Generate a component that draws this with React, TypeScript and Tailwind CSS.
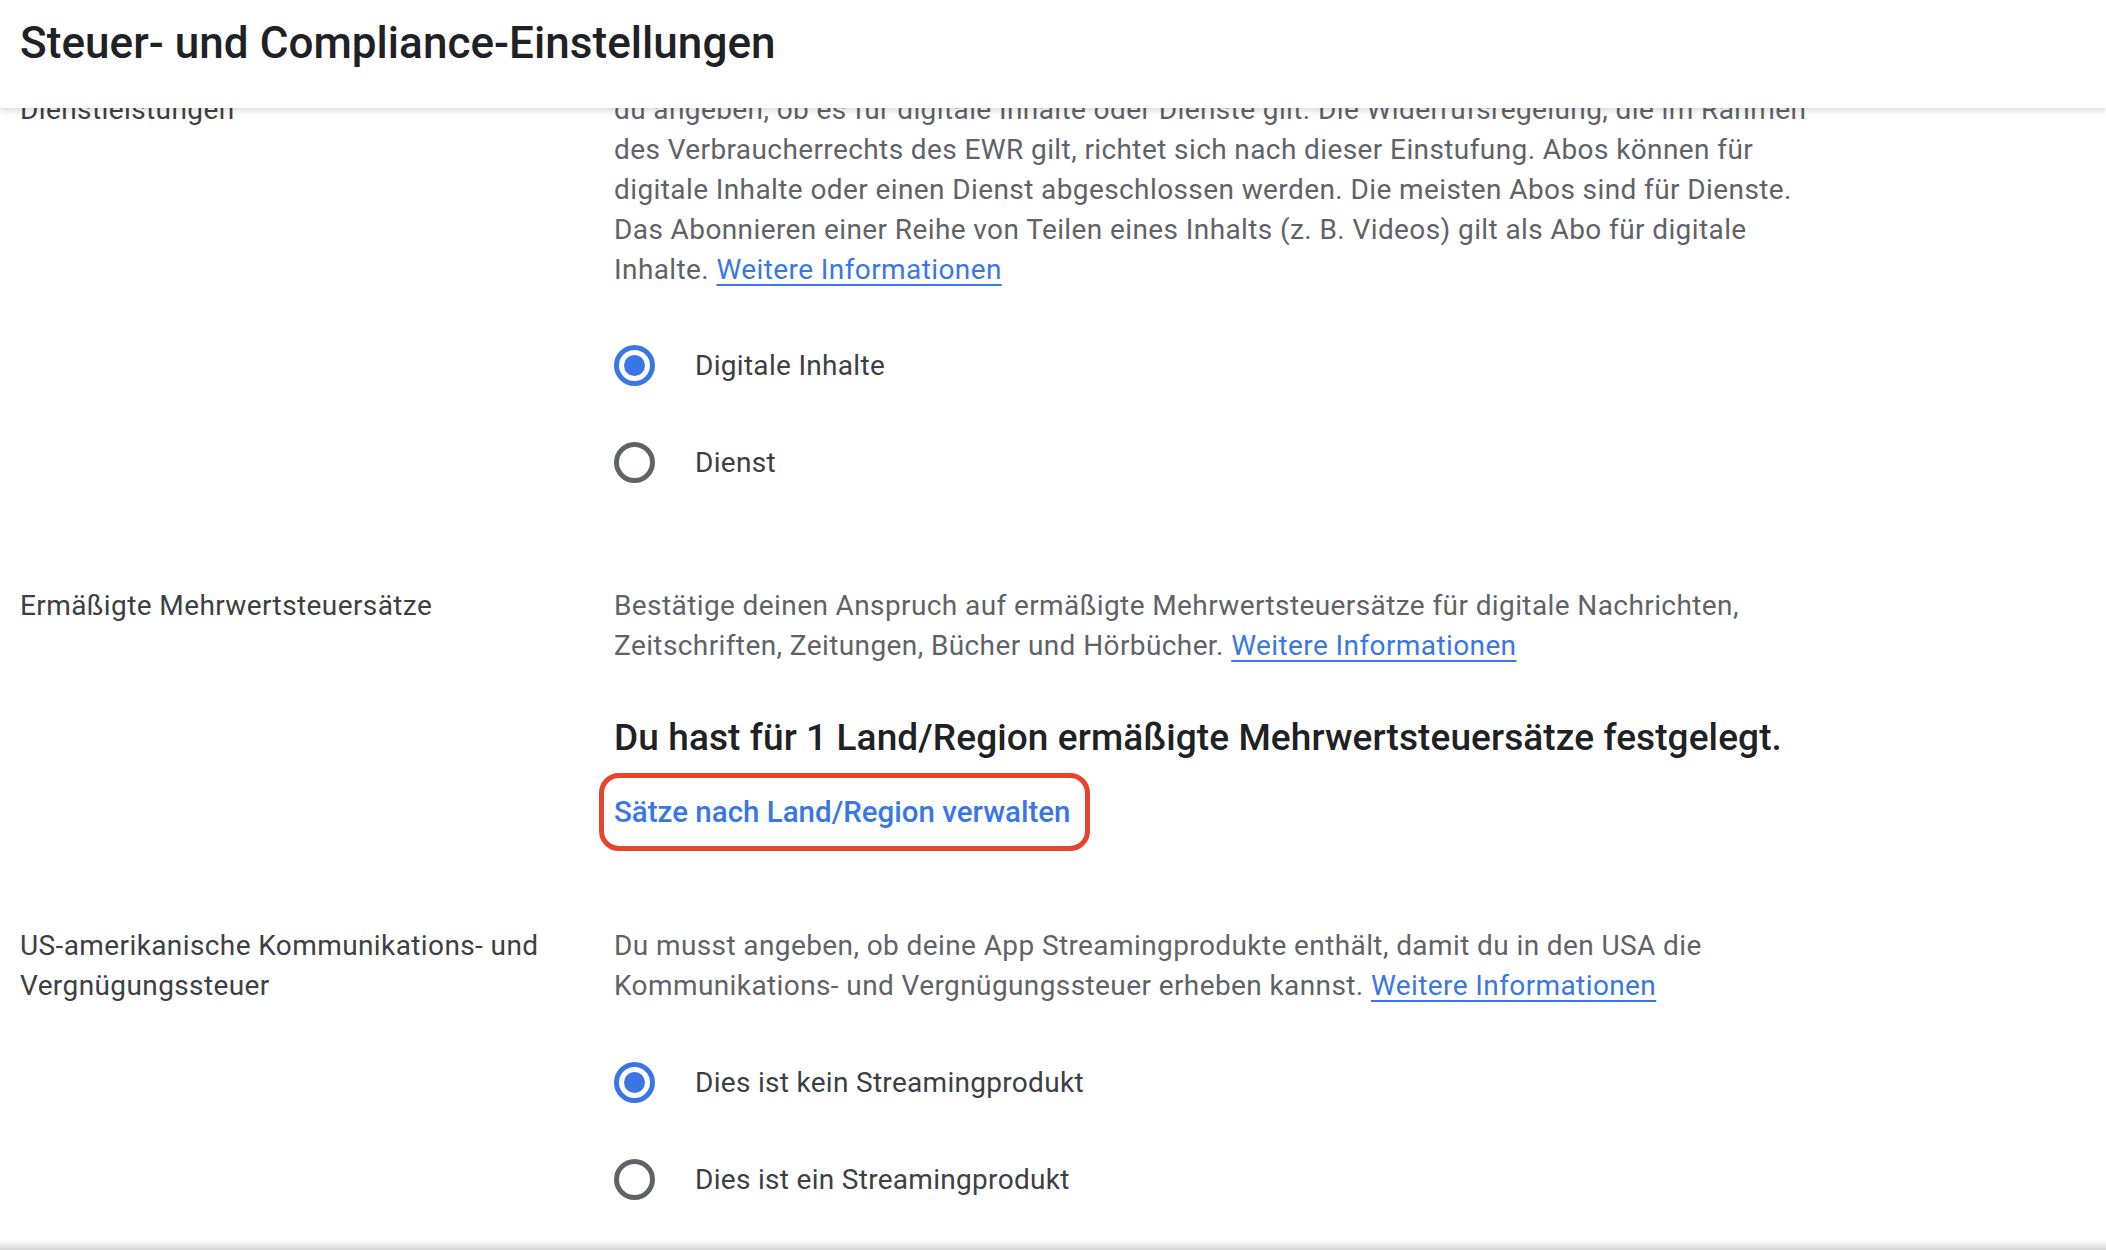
import React from "react";

const BLUE = "#3a77e4";

function Radio({ checked, label }: { checked?: boolean; label: string }) {
  return (
    <label className="flex h-[97px] items-center gap-[40px] cursor-pointer">
      <span
        className={
          checked
            ? "flex h-[41px] w-[41px] shrink-0 items-center justify-center rounded-full border-[5px] border-[#3a77e4]"
            : "flex h-[41px] w-[41px] shrink-0 items-center justify-center rounded-full border-[5px] border-[#5f6368]"
        }
      >
        {checked && <span className="h-[21px] w-[21px] rounded-full bg-[#3a77e4]" />}
      </span>
      <span className="text-[28px] leading-[40px] tracking-[0.3px] text-[#3c4043]">{label}</span>
    </label>
  );
}

function MoreInfo() {
  return (
    <a
      href="#"
      className="text-[#3a77e4] underline decoration-2 underline-offset-[5px]"
      style={{ color: BLUE }}
    >
      Weitere Informationen
    </a>
  );
}

function Section({ label, children }: { label: React.ReactNode; children: React.ReactNode }) {
  return (
    <section className="flex gap-[34px] px-[20px]">
      {/* Label column */}
      <div className="w-[560px] shrink-0 text-[28px] leading-[40px] tracking-[0.4px] text-[#3c4043]">{label}</div>
      {/* Content column */}
      <div className="max-w-[1205px] flex-1">{children}</div>
    </section>
  );
}

export default function App() {
  return (
    <div className="flex h-[1250px] w-full flex-col overflow-hidden bg-white font-['Roboto','Liberation_Sans',sans-serif]">
      {/* Sticky header */}
      <header className="relative z-10 h-[108px] shrink-0 bg-white px-[20px] pt-[15px] shadow-[0_3px_6px_rgba(0,0,0,0.14)]">
        <h1 className="text-[44px] leading-[56px] font-medium tracking-[0.05px] text-[#202124]">
          Steuer- und Compliance-Einstellungen
        </h1>
      </header>

      {/* Scrolled content */}
      <main className="flex-1 overflow-hidden">
        <div className="-mt-[58px] flex flex-col gap-[75px]">
          <Section label="Einstufung als digitale Inhalte oder Dienstleistungen">
            <p className="text-[28px] leading-[40px] tracking-[0.4px] text-[#5f6368]">
              Bei Abos und In-App-Produkten, die du in deiner App anbietest, musst
              <br />
              du angeben, ob es für digitale Inhalte oder Dienste gilt. Die Widerrufsregelung, die im Rahmen
              des Verbraucherrechts des EWR gilt, richtet sich nach dieser Einstufung. Abos können für
              digitale Inhalte oder einen Dienst abgeschlossen werden. Die meisten Abos sind für Dienste.
              Das Abonnieren einer Reihe von Teilen eines Inhalts (z. B. Videos) gilt als Abo für digitale
              Inhalte. <MoreInfo />
            </p>
            <div className="mt-[27px] flex flex-col">
              <Radio checked label="Digitale Inhalte" />
              <Radio label="Dienst" />
            </div>
          </Section>

          <Section label="Ermäßigte Mehrwertsteuersätze">
            <p className="text-[28px] leading-[40px] tracking-[0.4px] text-[#5f6368]">
              Bestätige deinen Anspruch auf ermäßigte Mehrwertsteuersätze für digitale Nachrichten,
              Zeitschriften, Zeitungen, Bücher und Hörbücher. <MoreInfo />
            </p>
            <h2 className="mt-[48px] text-[37px] leading-[48px] font-medium tracking-[0.1px] text-[#202124]">
              Du hast für 1 Land/Region ermäßigte Mehrwertsteuersätze festgelegt.
            </h2>
            <a
              href="#"
              className="-ml-[15px] mt-[11px] inline-flex h-[78px] items-center rounded-[20px] border-[5px] border-[#e8432d] pl-[10px] pr-[14px] text-[29.5px] leading-[40px] font-medium text-[#3a77e4]"
            >
              Sätze nach Land/Region verwalten
            </a>
          </Section>

          <Section label="US-amerikanische Kommunikations- und Vergnügungssteuer">
            <p className="text-[28px] leading-[40px] tracking-[0.4px] text-[#5f6368]">
              Du musst angeben, ob deine App Streamingprodukte enthält, damit du in den USA die
              Kommunikations- und Vergnügungssteuer erheben kannst. <MoreInfo />
            </p>
            <div className="mt-[28px] flex flex-col">
              <Radio checked label="Dies ist kein Streamingprodukt" />
              <Radio label="Dies ist ein Streamingprodukt" />
            </div>
          </Section>
        </div>
      </main>

      {/* Edge of the footer bar below the fold */}
      <div className="h-[10px] shrink-0 bg-linear-to-b from-white to-[#d4d4d4]" />
    </div>
  );
}
